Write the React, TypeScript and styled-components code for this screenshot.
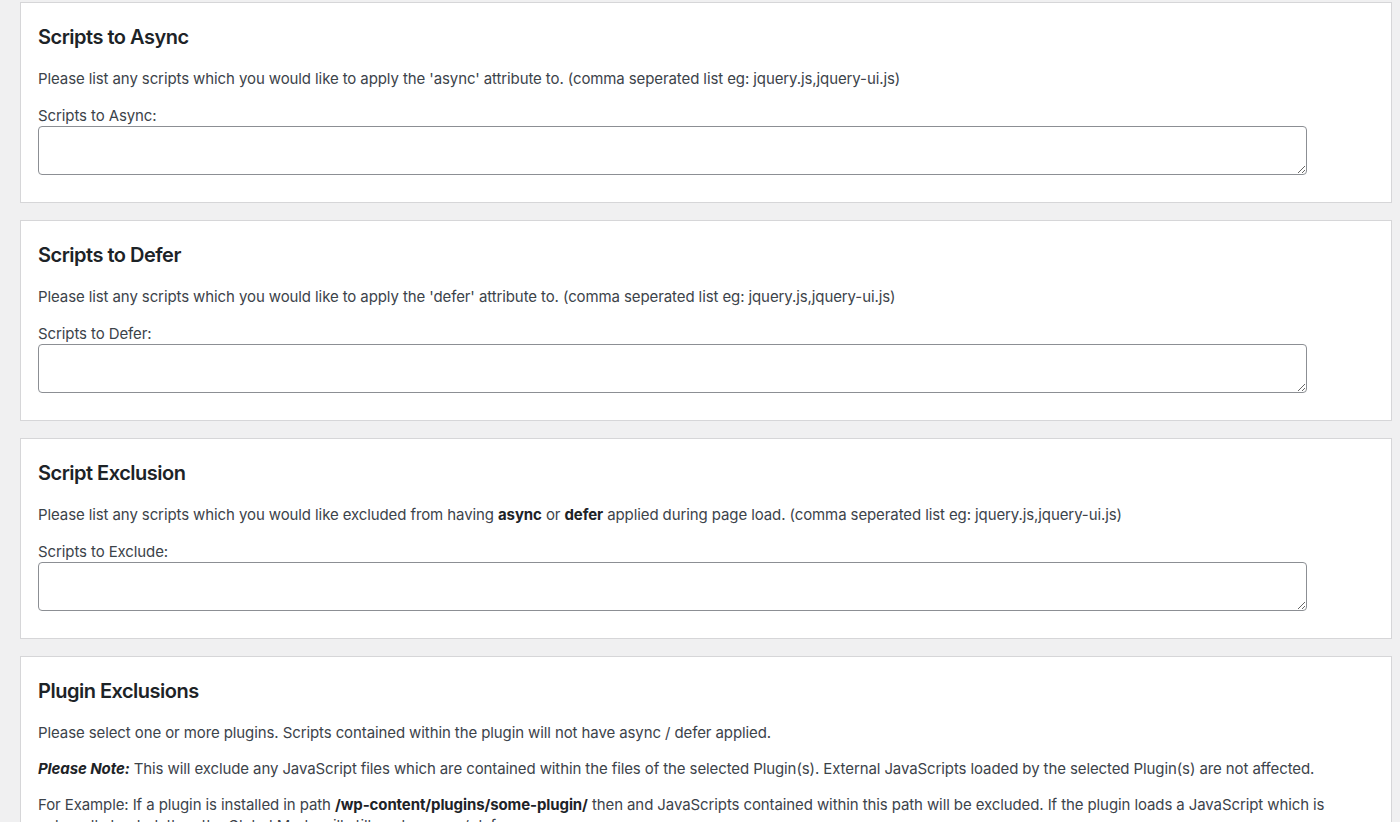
import React from "react";
import styled, { createGlobalStyle } from "styled-components";

const GlobalStyle = createGlobalStyle`
  html, body {
    margin: 0;
    padding: 0;
    background: #f0f0f1;
  }
  body {
    font-family: Inter, "Noto Sans", "Liberation Sans", sans-serif;
    color: #3c434a;
    overflow: hidden;
  }
`;

const Page = styled.div`
  display: flex;
  flex-direction: column;
  gap: 17px;
  padding: 2px 8px 0 20px;
`;

const Panel = styled.section`
  background: #ffffff;
  border: 1px solid #d6d6d8;
  padding: 20px 17px 27px;
  display: flex;
  flex-direction: column;
`;

const Heading = styled.h2`
  margin: 0 0 17px;
  font-size: 20px;
  line-height: 28px;
  font-weight: 600;
  letter-spacing: -0.5px;
  color: #1d2327;
`;

const Para = styled.p<{ $gap?: number }>`
  margin: ${(p) => p.$gap ?? 0}px 0 0;
  font-size: 15px;
  line-height: 21px;
  letter-spacing: -0.1px;
  color: #3c434a;

  strong {
    font-weight: 700;
    color: #1d2327;
  }
  em {
    font-style: italic;
  }
`;

const Label = styled.label`
  margin-top: 16px;
  font-size: 15px;
  line-height: 21px;
  letter-spacing: -0.1px;
  color: #3c434a;
`;

const TextBox = styled.textarea`
  box-sizing: border-box;
  width: 95%;
  height: 49px;
  margin: 0;
  border: 1px solid #8c8f94;
  border-radius: 4px;
  background: #fff;
  font: inherit;
  font-size: 15px;
  padding: 6px 8px;
  outline: none;
`;

type FieldProps = {
  title: string;
  label: string;
  children: React.ReactNode;
};

const FieldPanel = ({ title, label, children }: FieldProps) => (
  <Panel>
    <Heading>{title}</Heading>
    <Para>{children}</Para>
    <Label>{label}</Label>
    <TextBox />
  </Panel>
);

export default function App() {
  return (
    <>
      <GlobalStyle />
      <Page>
        <FieldPanel title="Scripts to Async" label="Scripts to Async:">
          Please list any scripts which you would like to apply the 'async' attribute to. (comma seperated list eg:
          jquery.js,jquery-ui.js)
        </FieldPanel>
        <FieldPanel title="Scripts to Defer" label="Scripts to Defer:">
          Please list any scripts which you would like to apply the 'defer' attribute to. (comma seperated list eg:
          jquery.js,jquery-ui.js)
        </FieldPanel>
        <FieldPanel title="Script Exclusion" label="Scripts to Exclude:">
          Please list any scripts which you would like excluded from having <strong>async</strong> or{" "}
          <strong>defer</strong> applied during page load. (comma seperated list eg: jquery.js,jquery-ui.js)
        </FieldPanel>
        <Panel>
          <Heading>Plugin Exclusions</Heading>
          <Para>
            Please select one or more plugins. Scripts contained within the plugin will not have async / defer applied.
          </Para>
          <Para $gap={15}>
            <strong>
              <em>Please Note:</em>
            </strong>{" "}
            This will exclude any JavaScript files which are contained within the files of the selected Plugin(s).
            External JavaScripts loaded by the selected Plugin(s) are not affected.
          </Para>
          <Para $gap={15}>
            For Example: If a plugin is installed in path <strong>/wp-content/plugins/some-plugin/</strong> then and
            JavaScripts contained within this path will be excluded. If the plugin loads a JavaScript which is
            externally loaded, then the Global Mode will still apply async / defer.
          </Para>
        </Panel>
      </Page>
    </>
  );
}
